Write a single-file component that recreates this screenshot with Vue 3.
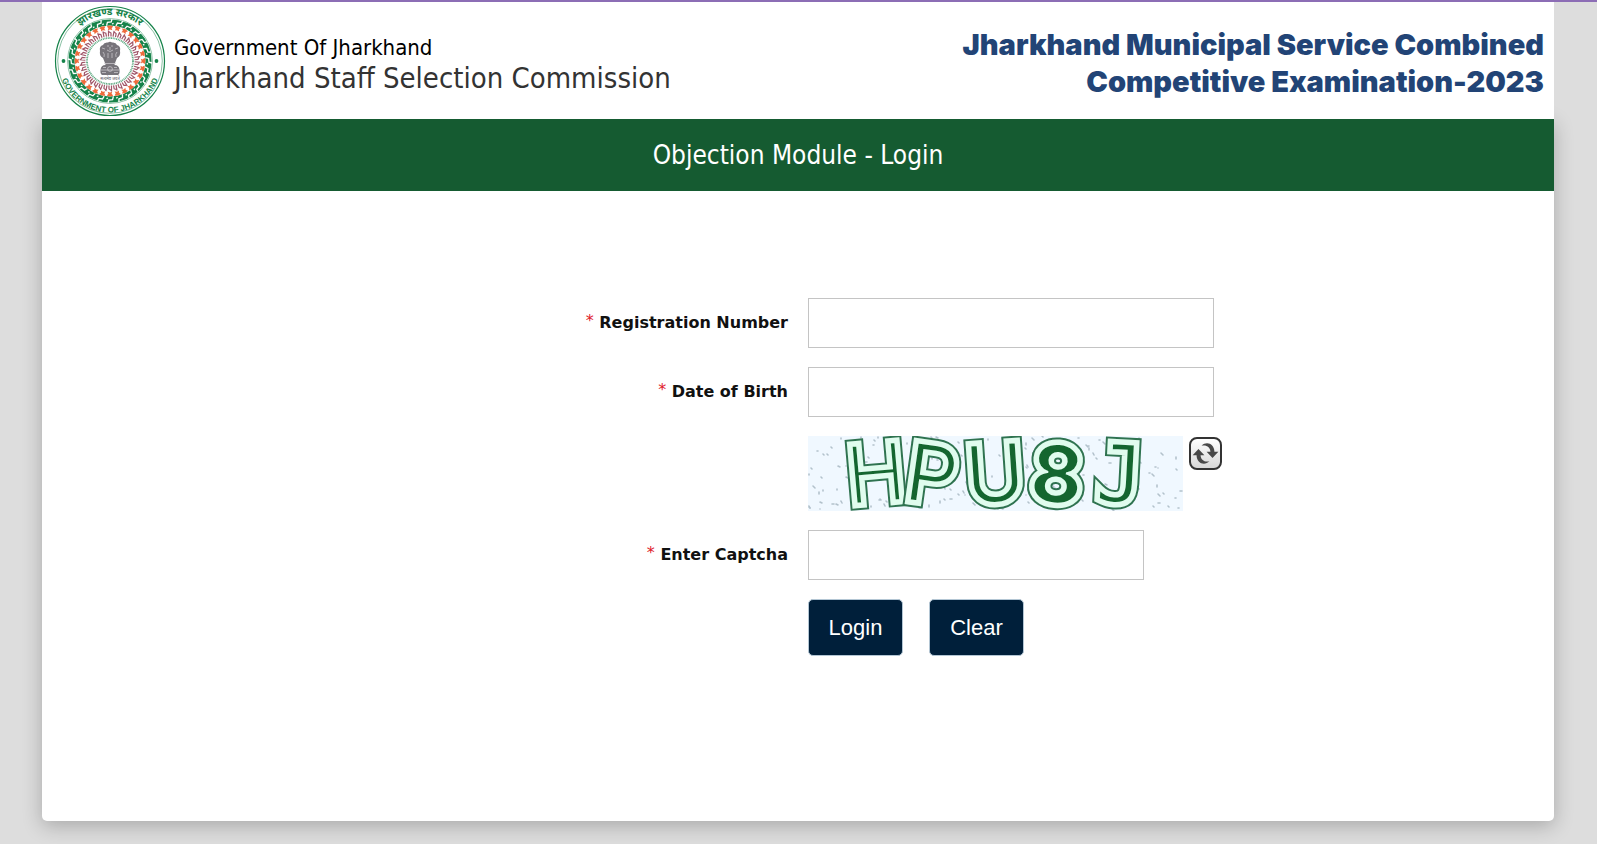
<template>
  <div class="page">
    <header class="header">
      <div class="brand">
        <svg class="emblem" viewBox="0 0 112 112" role="img" aria-label="Jharkhand emblem">
          <defs>
            <path id="arc-top" d="M 10 56 A 46 46 0 0 1 102 56" />
            <path id="arc-bottom" d="M 4.5 56 A 51.5 51.5 0 0 0 107.5 56" />
          </defs>
          <g fill="none" stroke="#16834a">
            <circle cx="56" cy="56" r="54.5" stroke-width="1.2" />
            <circle cx="56" cy="56" r="52.3" stroke-width="0.5" />
            <circle cx="56" cy="56" r="42.4" stroke-width="0.5" />
            <circle cx="56" cy="56" r="38.5" stroke-width="6" />
            <circle cx="56" cy="56" r="23" stroke-width="1.8" stroke-dasharray="1 0.7" opacity="0.7" />
          </g>
          <g fill="none" stroke="#fff" stroke-width="1.3">
            <path
              v-for="n in 24"
              :key="n"
              d="M 52.6 20.6 L 53.4 17.4 L 57.2 17 L 58 14 M 58 19 l 1.6 -.6"
              :transform="`rotate(${n * 15} 56 56)`"
            />
          </g>
          <g fill="#ef6b3c">
            <path
              v-for="n in 28"
              :key="n"
              d="M 52.8 21.4 q 3.2 -1.8 6.4 0 l -1.6 1.8 l .8 2 l -2.4 -.8 l -2.2 .8 l .6 -2 z"
              :transform="`rotate(${n * 360 / 28} 56 56)`"
            />
          </g>
          <g fill="none" stroke="#a05568" stroke-width="1.2">
            <path
              v-for="n in 34"
              :key="n"
              d="M 54.5 31.4 V 25.6 M 57 31.4 V 28 L 55 26.8"
              :transform="`rotate(${n * 360 / 34} 56 56)`"
            />
          </g>
          <circle cx="9.5" cy="56" r="1.9" fill="#16834a" />
          <circle cx="102.5" cy="56" r="1.9" fill="#16834a" />
          <!-- lion capital -->
          <path d="M 49 40 Q 50 37 54 37.5 Q 56 36 58 37.5 Q 62 37 63 40 Q 67 41 66 46 Q 67 51 63 53 L 61 58 H 51 L 49 53 Q 45 51 46 46 Q 45 41 49 40 Z" fill="#77747a" />
          <path d="M 51 57 H 61 L 60.5 60 Q 65 60 65.5 65 Q 66 69 64 70 H 48 Q 46 69 46.5 65 Q 47 60 51.5 60 Z" fill="#77747a" />
          <g fill="none" stroke="#d2d0d4" stroke-width="0.7">
            <path d="M 48 43 l 3 1 M 49 47 q 2 2 1 5 M 64 43 l -3 1 M 63 47 q -2 2 -1 5" />
            <path d="M 53 41 h 2 M 57 41 h 2 M 53 45 q 3 3 6 0 M 54 48 v 5 M 58 48 v 5 M 56 42 v 3" />
            <path d="M 50 58.5 h 12 M 47 65 h 18 M 49 62.5 h 3 M 60 62.5 h 3 M 48 67.5 h 4 M 60 67.5 h 4" />
            <circle cx="56" cy="64" r="2.4" />
          </g>
          <text class="motto" x="56" y="75">सत्यमेव जयते</text>
          <text class="seal-hindi">
            <textPath href="#arc-top" startOffset="50%">झारखण्ड सरकार</textPath>
          </text>
          <text class="seal-text">
            <textPath href="#arc-bottom" startOffset="50%">GOVERNMENT OF JHARKHAND</textPath>
          </text>
        </svg>
        <div class="brand-text">
          <p class="gov">Government Of Jharkhand</p>
          <p class="commission">Jharkhand Staff Selection Commission</p>
        </div>
      </div>
      <h1 class="exam">Jharkhand Municipal Service Combined<br />Competitive Examination-2023</h1>
    </header>

    <main class="card">
      <h2 class="title">Objection Module - Login</h2>

      <form class="form" @submit.prevent="login">
        <label for="regNo"><span class="req">*</span> Registration Number</label>
        <input id="regNo" v-model="form.regNo" type="text" />

        <label for="dob"><span class="req">*</span> Date of Birth</label>
        <input id="dob" v-model="form.dob" type="text" />

        <div class="captcha-row">
          <svg class="captcha" viewBox="0 0 375 75" role="img" aria-label="Captcha">
            <rect width="375" height="75" fill="#f0f8ff" />
            <path
              v-for="(s, i) in specks"
              :key="i"
              :d="`M ${s.x} ${s.y} l ${s.dx} ${s.dy}`"
              stroke="#b3c2cc"
              stroke-width="1.6"
              stroke-linecap="round"
            />
            <defs>
              <text
                v-for="(l, i) in letters"
                :id="'letter-' + i"
                :key="i"
                class="letter"
                :class="l.face"
                :x="l.x"
                :y="l.y"
                :transform="`rotate(${l.angle} ${l.x} 38)`"
              >{{ l.char }}</text>
            </defs>
            <g v-for="(l, i) in letters" :key="i">
              <use :href="'#letter-' + i" fill="#2f7350" stroke="#2f7350" stroke-width="13" />
              <use :href="'#letter-' + i" fill="#e0fcee" stroke="#e0fcee" stroke-width="9" />
              <use :href="'#letter-' + i" fill="#14662f" stroke="#e0fcee" stroke-width="2" />
            </g>
          </svg>
          <button type="button" class="refresh" aria-label="Refresh captcha" @click="refresh">
            <svg viewBox="1 1 26 26" aria-hidden="true">
              <path d="M 10.5 7 C 15 2.6 22 5.4 22 12.5 H 25.5 L 20.3 18 L 15 12.5 H 18.4 C 18.4 8.6 15 6 10.5 7 Z" fill="#484848" />
              <path d="M 17.5 21 C 13 25.4 6 22.6 6 15.5 H 2.5 L 7.7 10 L 13 15.5 H 9.6 C 9.6 19.4 13 22 17.5 21 Z" fill="#484848" />
            </svg>
          </button>
        </div>

        <label for="captcha"><span class="req">*</span> Enter Captcha</label>
        <input id="captcha" v-model="form.captcha" type="text" class="short" />

        <div class="actions">
          <button type="submit" class="btn">Login</button>
          <button type="button" class="btn" @click="clear">Clear</button>
        </div>
      </form>
    </main>
  </div>
</template>

<script setup>
import { reactive, ref } from 'vue'

const form = reactive({
  regNo: '',
  dob: '',
  captcha: ''
})

const letters = [
  { char: 'H', x: 68, y: 66, angle: -5, face: 'light' },
  { char: 'P', x: 124, y: 67, angle: 8, face: 'regular' },
  { char: 'U', x: 187, y: 66, angle: -4, face: 'regular' },
  { char: '8', x: 249, y: 67, angle: 5, face: 'bold' },
  { char: 'J', x: 312, y: 66, angle: 3, face: 'mono' }
]

const makeSpecks = (seed) => {
  let n = seed
  const rand = () => {
    n = (n * 16807) % 2147483647
    return n / 2147483647
  }
  return Array.from({ length: 190 }, () => ({
    x: Math.round(rand() * 373),
    y: Math.round(rand() * 73),
    dx: Math.round(rand() * 2),
    dy: Math.round(rand() * 2)
  }))
}

const seed = ref(4211)
const specks = ref(makeSpecks(seed.value))

const refresh = () => {
  seed.value += 97
  specks.value = makeSpecks(seed.value)
}

const clear = () => {
  form.regNo = ''
  form.dob = ''
  form.captcha = ''
}

const login = () => {
  if (!form.regNo || !form.dob || !form.captcha) return
  clear()
}
</script>

<style>
body {
  margin: 0;
  background: #dddddd;
}
</style>

<style scoped>
.page {
  border-top: 2px solid #8c6db5;
  padding: 0 43px 23px 42px;
  font-family: 'DejaVu Sans Condensed', 'DejaVu Sans', sans-serif;
}

.header {
  position: relative;
  z-index: 1;
  display: flex;
  justify-content: space-between;
  align-items: center;
  box-sizing: border-box;
  min-height: 117px;
  padding: 3px 10px 2px 12px;
  background: #fff;
}

.brand {
  display: flex;
  align-items: center;
  gap: 8px;
}

.emblem {
  width: 112px;
  height: 112px;
}

.seal-text {
  font: bold 8px 'Liberation Sans', sans-serif;
  fill: #16834a;
  text-anchor: middle;
}

.seal-hindi {
  font: bold 10px 'Noto Sans', sans-serif;
  fill: #16834a;
  text-anchor: middle;
}

.motto {
  font: 4px 'Noto Sans', sans-serif;
  fill: #55525a;
  text-anchor: middle;
}

.brand-text {
  padding-top: 6px;
}

.brand-text p {
  margin: 0;
}

.gov {
  font-size: 22px;
  line-height: 28px;
  color: #000;
}

.commission {
  font-size: 29px;
  line-height: 32px;
  color: #333;
}

.exam {
  margin: 0;
  padding-top: 4px;
  font-family: Inter, 'Liberation Sans', sans-serif;
  font-size: 29px;
  font-weight: 900;
  line-height: 37px;
  text-align: right;
  color: #224476;
}

.card {
  background: #fff;
  border-radius: 0 0 5px 5px;
  box-shadow: 0 5px 20px rgba(0, 0, 0, 0.24);
}

.title {
  margin: 0;
  background: #155b31;
  color: #fff;
  font-size: 26px;
  font-weight: normal;
  line-height: 72px;
  text-align: center;
}

.form {
  display: grid;
  grid-template-columns: 1fr 1fr;
  gap: 19px 20px;
  padding: 107px 0 165px;
}

label {
  justify-self: end;
  font-family: 'DejaVu Sans', sans-serif;
  font-size: 16px;
  font-weight: bold;
  line-height: 46px;
  color: #111;
}

.req {
  font-weight: normal;
  color: #e0202a;
  vertical-align: 2px;
}

input {
  box-sizing: border-box;
  width: 406px;
  height: 50px;
  padding: 0 12px;
  border: 1px solid #c4c4c4;
  font-size: 16px;
}

input.short {
  width: 336px;
}

.captcha-row,
.actions {
  grid-column: 2;
  display: flex;
}

.captcha-row {
  gap: 6px;
  align-items: flex-start;
}

.captcha {
  width: 375px;
  height: 75px;
}

.letter {
  font-family: Inter, 'DejaVu Sans', sans-serif;
  font-size: 80px;
  text-anchor: middle;
}

.light {
  font-weight: 300;
}

.regular {
  font-weight: 400;
}

.bold {
  font-weight: 700;
}

.mono {
  font-family: 'DejaVu Sans Mono', monospace;
}

.refresh {
  display: flex;
  width: 33px;
  height: 33px;
  margin-top: 1px;
  padding: 0;
  border: 2px solid #333;
  border-radius: 8px;
  background: linear-gradient(#fff, #d8d8d8);
}

.refresh svg {
  width: 100%;
  height: 100%;
}

.actions {
  gap: 26px;
}

.btn {
  min-width: 95px;
  height: 57px;
  padding: 0 19px;
  border: 1px solid #b3c6d4;
  border-radius: 5px;
  background: #001f3a;
  color: #fff;
  font-family: 'Liberation Sans', sans-serif;
  font-size: 22px;
}
</style>
